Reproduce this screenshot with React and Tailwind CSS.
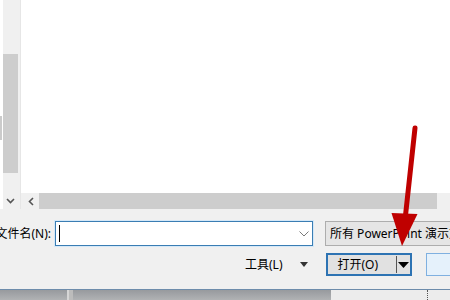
import React from "react";

export default function App() {
  return (
    <div
      className="relative w-[450px] h-[300px] overflow-hidden bg-white flex flex-col text-[12px] text-black"
      style={{ fontFamily: '"Noto Sans", "Noto Sans CJK SC", sans-serif' }}
    >
      {/* top: list area with scrollbars */}
      <div className="flex h-[209px] shrink-0">
        <div className="w-[3px] shrink-0 flex flex-col">
          <div className="h-[116px]" />
          <div className="h-[24px] w-[2px] bg-[#cbcbcb]" />
        </div>
        {/* vertical scrollbar */}
        <div className="w-[18px] shrink-0 bg-[#f0f0f0] border-r border-[#e6e6e6] flex flex-col">
          <div className="h-[54px]" />
          <div className="h-[119px] w-[15px] bg-[#cdcdcd]" />
          <div className="h-[20px]" />
          <div className="h-[16px] flex items-center justify-center pr-[3px]">
            <svg width="9" height="6" viewBox="0 0 9 6">
              <path d="M1 1 L4.5 4.5 L8 1" fill="none" stroke="#555" strokeWidth="1.6" />
            </svg>
          </div>
        </div>
        <div className="flex-1 flex flex-col">
          <div className="h-[193px] bg-white" />
          {/* horizontal scrollbar */}
          <div className="h-[16px] flex bg-[#f0f0f0]">
            <div className="w-[18px] flex items-center justify-center pl-[2px]">
              <svg width="6" height="9" viewBox="0 0 6 9">
                <path d="M5 1 L1.5 4.5 L5 8" fill="none" stroke="#555" strokeWidth="1.6" />
              </svg>
            </div>
            <div className="w-[398px] bg-[#cdcdcd]" />
            <div className="flex-1" />
          </div>
        </div>
      </div>

      {/* bottom dialog panel */}
      <div className="h-[80px] shrink-0 bg-[#f0f0f0] flex flex-col pt-[12px]">
        <div className="flex items-center h-[25px]">
          <div className="w-[51px] shrink-0 flex justify-end whitespace-nowrap leading-none">
            文件名(N):
          </div>
          <div className="ml-[4px] w-[258px] h-[25px] shrink-0 bg-white border border-[#3a7db3] shadow-[0_0_0_1px_#d4e8f8] flex items-center">
            <div className="ml-[3px] w-[1px] h-[17px] bg-black" />
            <div className="flex-1" />
            <svg width="10" height="6" viewBox="0 0 10 6" className="mr-[3px]">
              <path d="M0.5 0.5 L5 5 L9.5 0.5" fill="none" stroke="#7a7a7a" strokeWidth="1" />
            </svg>
          </div>
          <div className="ml-[12px] w-[140px] h-[25px] shrink-0 bg-[#e5e5e5] border border-[#adadad] flex items-center pl-[4px] whitespace-nowrap leading-none">
            所有 PowerPoint 演示文稿
          </div>
        </div>
        <div className="flex items-center h-[23px] mt-[7px]">
          <div className="ml-[245px] whitespace-nowrap leading-none">工具(L)</div>
          <svg width="8" height="5" viewBox="0 0 8 5" className="ml-[17px] shrink-0">
            <path d="M0 0 L8 0 L4 5 Z" fill="#333" />
          </svg>
          <div className="ml-[18px] w-[86px] h-[23px] shrink-0 border-2 border-[#2d73b3] bg-[#e1e1e1] flex items-center">
            <div className="w-[68px] pl-[10px] whitespace-nowrap leading-none">打开(O)</div>
            <div className="w-[1px] h-[17px] bg-[#555]" />
            <div className="flex-1 flex justify-center">
              <svg width="11" height="6" viewBox="0 0 11 6">
                <path d="M0 0 L11 0 L5.5 6 Z" fill="#000" />
              </svg>
            </div>
          </div>
          <div className="ml-[14px] w-[40px] h-[23px] shrink-0 border border-[#7fb0e0] bg-[#e5f1fb]" />
        </div>
      </div>

      {/* bottom strip (background window) */}
      <div className="h-[11px] shrink-0 border-t border-[#6d8cab] flex">
        <div className="w-[67px] bg-linear-to-b from-[#979a9e] to-[#b0b2b4]" />
        <div className="w-[2px] bg-[#d6d6d6]" />
        <div className="w-[4px] bg-[#bcbcbc]" />
        <div className="w-[258px] bg-linear-to-b from-[#979a9e] to-[#b0b2b4]" />
        <div className="flex-1 bg-[#ececec] flex">
          <div className="ml-[96px] w-0 border-l border-dotted border-[#555]" />
        </div>
      </div>

      {/* red arrow overlay */}
      <svg
        className="absolute left-0 top-0 pointer-events-none"
        width="450"
        height="300"
        viewBox="0 0 450 300"
      >
        <line x1="415" y1="128" x2="405" y2="220" stroke="#bf0000" strokeWidth="5" strokeLinecap="round" />
        <path d="M391.5 213 L417.5 214 L402 246 Z" fill="#bf0000" />
      </svg>
    </div>
  );
}
